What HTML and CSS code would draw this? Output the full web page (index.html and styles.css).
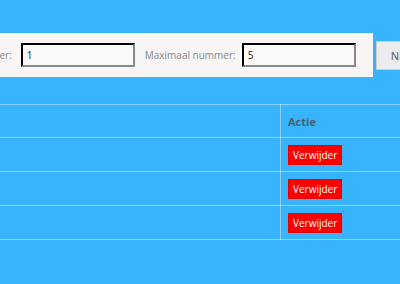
FILE: index.html
```html
<!DOCTYPE html>
<html lang="nl">
<head>
    <meta charset="UTF-8">
    <meta name="viewport" content="width=device-width, initial-scale=1.0">
    <title>Nummers</title>
    <link rel="stylesheet" href="styles.css">
</head>
<body>
    <div class="page">
        <div class="toolbar">
            <div class="filter">
                <label class="label" for="minNum">Minimaal nummer:</label>
                <input class="field" id="minNum" type="text" value="1">
                <label class="label" for="maxNum">Maximaal nummer:</label>
                <input class="field" id="maxNum" type="text" value="5">
            </div>
            <button class="btn">Nieuw</button>
        </div>

        <table class="list">
            <thead>
                <tr><th class="col-num"></th><th>Actie</th></tr>
            </thead>
            <tbody>
                <tr><td class="col-num"></td><td><button class="btn-del">Verwijder</button></td></tr>
                <tr><td class="col-num"></td><td><button class="btn-del">Verwijder</button></td></tr>
                <tr><td class="col-num"></td><td><button class="btn-del">Verwijder</button></td></tr>
            </tbody>
        </table>
    </div>
</body>
</html>
```

FILE: styles.css
```css
body { margin: 0; background: #38b4fe; font-family: "Open Sans", "Liberation Sans", sans-serif; overflow: hidden; }
.page { margin-left: -87px; padding-top: 33px; width: 620px; }
.toolbar { display: flex; align-items: center; }
.filter { display: flex; align-items: center; background: #f7f6f5; padding: 10px 17px 10px 10px; }
.label { font-size: 10px; color: #888; margin-right: 9px; }
.field + .label { margin-right: 6px; }
.field { width: 114px; height: 24px; box-sizing: border-box; border: 2px inset #666; border-color: #555 #888 #888 #555; background: #f9f9f9; font-family: inherit; font-size: 10px; color: #222; padding: 0 4px; margin-right: 10px; }
.field:last-child { margin-right: 0; }
.btn { margin-left: 3px; height: 29px; padding: 0 14px; background: #ececec; border: 1px solid #ccc; font-family: inherit; font-size: 11px; color: #555; }
.list { margin-top: 27px; width: 100%; border-collapse: collapse; }
.list th, .list td { border-top: 1px solid rgba(255,255,255,0.4); border-bottom: 1px solid rgba(255,255,255,0.4); text-align: left; padding: 0 7px; font-size: 11px; }
.list th { height: 32px; color: #4a6070; font-weight: bold; }
.list td { height: 33px; }
.list .col-num { width: 353px; border-right: 1px solid rgba(255,255,255,0.4); }
.btn-del { background: #ff0000; color: #fff; border: 1px solid #e60000; font-family: inherit; font-size: 10px; padding: 2px 4px; height: 20px; }
```
